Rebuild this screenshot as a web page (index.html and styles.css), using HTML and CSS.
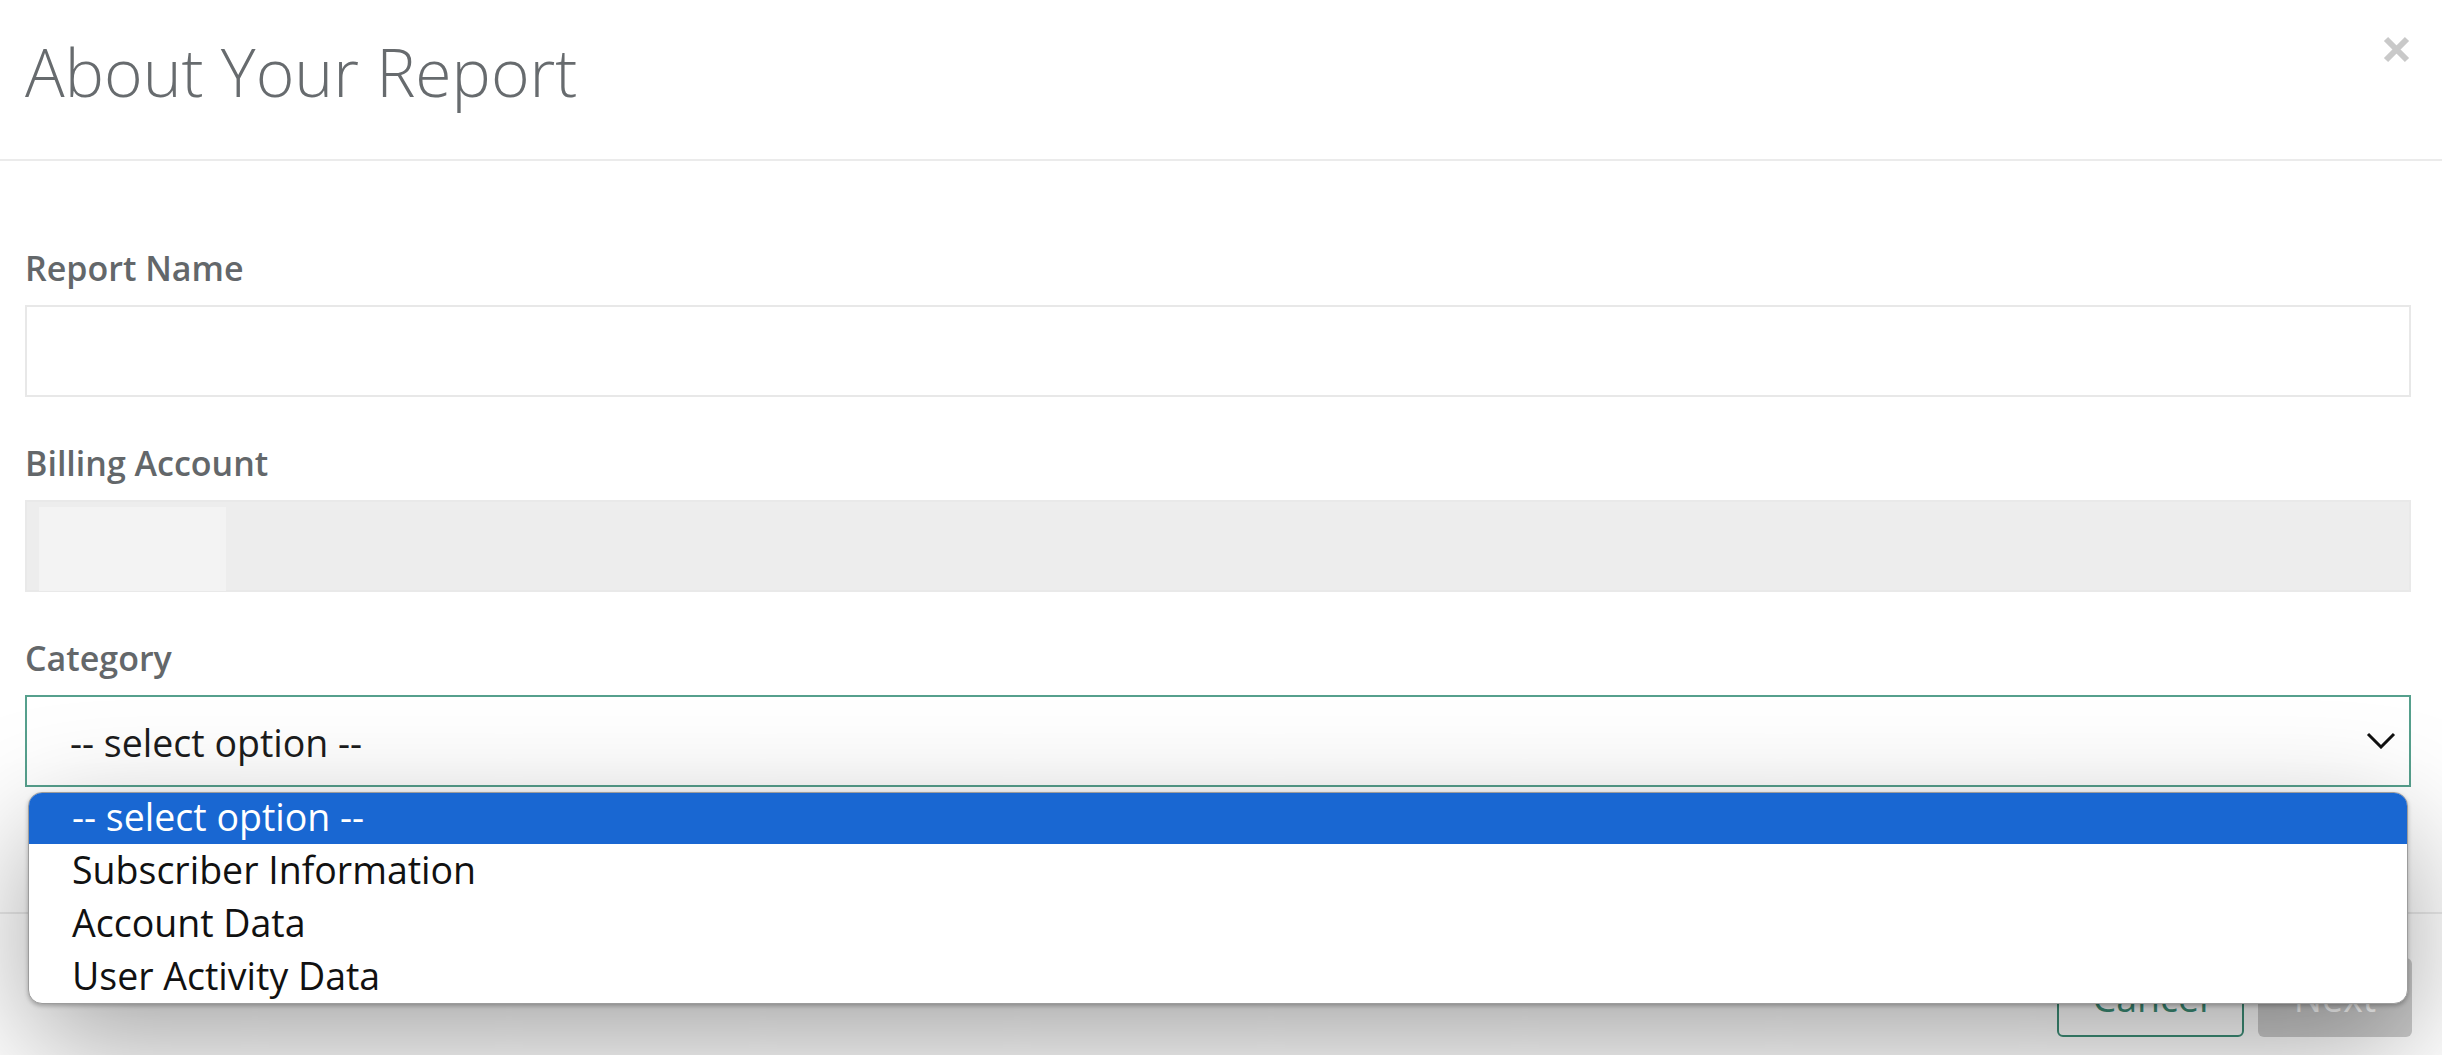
FILE: index.html
```html
<!DOCTYPE html>
<html lang="en">
<head>
<meta charset="utf-8">
<title>About Your Report</title>
<link rel="stylesheet" href="styles.css">
</head>
<body>
<div class="modal">
  <div class="modal-header">
    <h1 class="modal-title">About Your Report</h1>
    <button class="close" aria-label="Close">
      <svg width="27" height="27" viewBox="0 0 27 27"><path d="M3 3 L24 24 M24 3 L3 24" stroke="#c9c9c9" stroke-width="6" stroke-linecap="butt"/></svg>
    </button>
  </div>
  <div class="modal-body">
    <div class="field">
      <label class="field-label">Report Name</label>
      <div class="input"></div>
    </div>
    <div class="field">
      <label class="field-label">Billing Account</label>
      <div class="input input-disabled"><span class="skeleton"></span></div>
    </div>
    <div class="field field-last">
      <label class="field-label">Category</label>
      <div class="select-wrap">
        <div class="select">
          <span class="select-value">-- select option --</span>
          <svg class="chevron" width="30" height="17" viewBox="0 0 30 17"><path d="M2 2 L15 15 L28 2" fill="none" stroke="#111" stroke-width="3"/></svg>
        </div>
        <ul class="dropdown">
          <li class="option option-active">-- select option --</li>
          <li class="option">Subscriber Information</li>
          <li class="option">Account Data</li>
          <li class="option">User Activity Data</li>
        </ul>
      </div>
    </div>
  </div>
  <div class="modal-footer">
    <button class="btn btn-cancel">Cancel</button>
    <button class="btn btn-next">Next</button>
  </div>
</div>
</body>
</html>
```

FILE: styles.css
```css
html, body {
  margin: 0;
  padding: 0;
  background: #fff;
}
body {
  font-family: "Open Sans", "Noto Sans", sans-serif;
  overflow: hidden;
  height: 1055px;
}
.modal {
  width: 100%;
}
.modal-header {
  display: flex;
  justify-content: space-between;
  align-items: flex-start;
  padding: 31px 32px 47px 25px;
  border-bottom: 2px solid #ebebeb;
}
.modal-title {
  margin: 0;
  font-size: 66px;
  line-height: 81px;
  font-weight: 300;
  color: #676b6e;
}
.close {
  margin-top: 5px;
  padding: 0;
  border: 0;
  background: none;
  width: 27px;
  height: 27px;
  display: block;
}
.close svg { display: block; }
.modal-body {
  padding: 83px 31px 125px 25px;
}
.field {
  margin-bottom: 42px;
}
.field-last {
  margin-bottom: 0;
}
.field-label {
  display: block;
  font-size: 34px;
  line-height: 48px;
  font-weight: 600;
  color: #63676a;
  margin-bottom: 13px;
}
.input {
  box-sizing: border-box;
  height: 92px;
  border: 2px solid #e8e8e8;
  background: #fff;
}
.input-disabled {
  background: #ededed;
  border-color: #e9e9e9;
  padding: 5px 0 0 12px;
}
.skeleton {
  display: block;
  width: 187px;
  height: 84px;
  background: #f3f3f3;
}
.select-wrap {
  position: relative;
}
.select {
  box-sizing: border-box;
  height: 92px;
  border: 2px solid #56a08d;
  display: flex;
  align-items: center;
  justify-content: space-between;
  padding: 3px 13px 0 43px;
  background: #fff;
}
.select-value {
  font-size: 37.5px;
  color: #1c1c1c;
}
.chevron {
  display: block;
  margin-top: -4px;
}
.dropdown {
  position: absolute;
  z-index: 10;
  top: 97px;
  left: 3px;
  right: 3px;
  margin: 0;
  padding: 0;
  list-style: none;
  background: #fff;
  border: 1px solid #9c9c9c;
  border-radius: 14px;
  overflow: hidden;
  box-shadow: 0 40px 120px rgba(0, 0, 0, 0.36), 0 2px 4px rgba(0, 0, 0, 0.25);
}
.option {
  height: 53px;
  line-height: 52px;
  padding-left: 43px;
  font-size: 37.5px;
  color: #111;
}
.option-active {
  background: #1967d2;
  color: #fff;
  height: 51px;
  line-height: 48px;
}
.modal-footer {
  border-top: 2px solid #ebebeb;
  display: flex;
  justify-content: flex-end;
  gap: 14px;
  padding: 44px 30px 20px 25px;
}
.btn {
  box-sizing: border-box;
  height: 79px;
  border-radius: 6px;
  font-family: "Open Sans", "Noto Sans", sans-serif;
  font-size: 37.5px;
  padding: 0;
}
.btn-cancel {
  width: 187px;
  border: 2px solid #3d8f78;
  background: #fff;
  color: #3d8f78;
}
.btn-next {
  width: 154px;
  border: 0;
  background: #cdcdcd;
  color: #fff;
}
```
